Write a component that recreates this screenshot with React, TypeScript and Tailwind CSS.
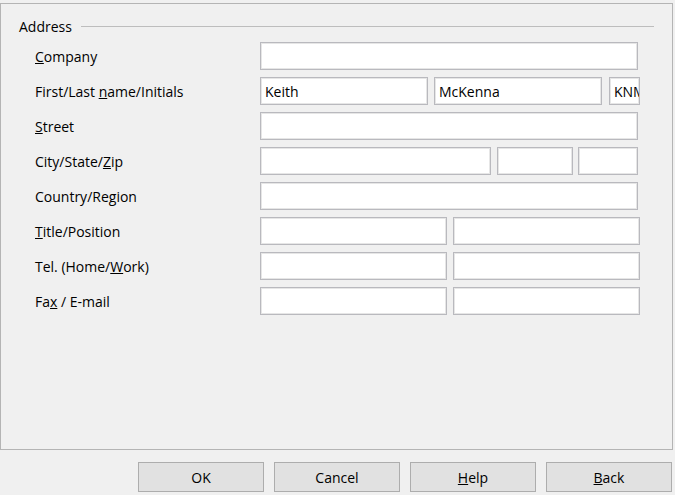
import React from "react";

const Field = ({ w, value }: { w: string; value?: string }) => (
  <div
    className={`${w} h-[28px] shrink-0 bg-white border border-[#b9b9be] shadow-[inset_0_0_0_1px_#e6e6e6] overflow-hidden whitespace-nowrap flex items-center px-[4px]`}
  >
    {value}
  </div>
);

const Row = ({ label, children }: { label: React.ReactNode; children: React.ReactNode }) => (
  <div className="flex items-center h-[28px]">
    <div className="w-[225px] shrink-0">{label}</div>
    <div className="flex">{children}</div>
  </div>
);

const Btn = ({ children }: { children: React.ReactNode }) => (
  <div className="w-[126px] h-[30px] bg-[#e1e1e1] border border-[#adadad] flex items-center justify-center">
    {children}
  </div>
);

export default function App() {
  return (
    <div
      className="w-[675px] h-[495px] bg-[#f0f0f0] text-[14px] text-black overflow-hidden"
      style={{ fontFamily: '"Open Sans", "Liberation Sans", sans-serif' }}
    >
      <div className="mt-[3px] w-[673px] h-[447px] border border-[#b4b4b4] flex flex-col">
        {/* group header */}
        <div className="flex items-center h-[20px] mt-[12px] pl-[18px] pr-[18px]">
          <span>Address</span>
          <div className="flex-1 ml-[9px] h-px bg-[#bdbdbd]" />
        </div>

        <div className="flex flex-col gap-[7px] mt-[6px] pl-[34px]">
          <Row label={<><u>C</u>ompany</>}>
            <Field w="w-[378px]" />
          </Row>
          <Row label={<>First/Last <u>n</u>ame/Initials</>}>
            <Field w="w-[168px]" value="Keith" />
            <div className="w-[6px]" />
            <Field w="w-[168px]" value="McKenna" />
            <div className="w-[7px]" />
            <Field w="w-[31px]" value="KNM" />
          </Row>
          <Row label={<><u>S</u>treet</>}>
            <Field w="w-[378px]" />
          </Row>
          <Row label={<>City/State/<u>Z</u>ip</>}>
            <Field w="w-[231px]" />
            <div className="w-[6px]" />
            <Field w="w-[76px]" />
            <div className="w-[5px]" />
            <Field w="w-[60px]" />
          </Row>
          <Row label={<>Country/Re<u>g</u>ion</>}>
            <Field w="w-[378px]" />
          </Row>
          <Row label={<><u>T</u>itle/Position</>}>
            <Field w="w-[187px]" />
            <div className="w-[6px]" />
            <Field w="w-[187px]" />
          </Row>
          <Row label={<>Tel. (Home/<u>W</u>ork)</>}>
            <Field w="w-[187px]" />
            <div className="w-[6px]" />
            <Field w="w-[187px]" />
          </Row>
          <Row label={<>Fa<u>x</u> / E-mail</>}>
            <Field w="w-[187px]" />
            <div className="w-[6px]" />
            <Field w="w-[187px]" />
          </Row>
        </div>
      </div>

      <div className="flex justify-end gap-[10px] mt-[12px] pr-[3px]">
        <Btn>OK</Btn>
        <Btn>Cancel</Btn>
        <Btn><span><u>H</u>elp</span></Btn>
        <Btn><span><u>B</u>ack</span></Btn>
      </div>
    </div>
  );
}
